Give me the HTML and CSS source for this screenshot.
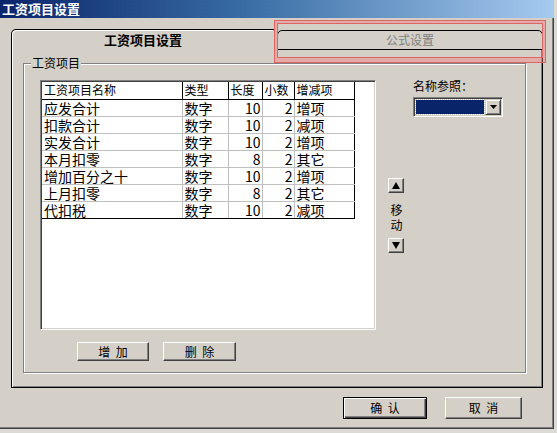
FILE: index.html
```html
<!DOCTYPE html>
<html lang="zh-CN">
<head>
<meta charset="utf-8">
<title>工资项目设置</title>
<link rel="stylesheet" href="styles.css">
</head>
<body>
<div class="window">
  <div class="titlebar">工资项目设置</div>
  <div class="client">
    <div class="tabctl">
      <div class="tabstrip">
        <div class="tab active">工资项目设置</div>
        <div class="tab inactive">公式设置</div>
      </div>
      <div class="panel">
        <div class="group">
          <span class="group-label">工资项目</span>
          <div class="group-inner">
            <div class="leftcol">
              <div class="grid">
                <table class="items">
                  <colgroup>
                    <col class="c-name"><col class="c-type"><col class="c-len"><col class="c-dec"><col class="c-sign">
                  </colgroup>
                  <thead>
                    <tr><th>工资项目名称</th><th>类型</th><th>长度</th><th>小数</th><th>增减项</th></tr>
                  </thead>
                  <tbody>
                    <tr><td>应发合计</td><td>数字</td><td class="num">10</td><td class="num">2</td><td>增项</td></tr>
                    <tr><td>扣款合计</td><td>数字</td><td class="num">10</td><td class="num">2</td><td>减项</td></tr>
                    <tr><td>实发合计</td><td>数字</td><td class="num">10</td><td class="num">2</td><td>增项</td></tr>
                    <tr><td>本月扣零</td><td>数字</td><td class="num">8</td><td class="num">2</td><td>其它</td></tr>
                    <tr><td>增加百分之十</td><td>数字</td><td class="num">10</td><td class="num">2</td><td>增项</td></tr>
                    <tr><td>上月扣零</td><td>数字</td><td class="num">8</td><td class="num">2</td><td>其它</td></tr>
                    <tr><td>代扣税</td><td>数字</td><td class="num">10</td><td class="num">2</td><td>减项</td></tr>
                  </tbody>
                </table>
              </div>
              <div class="btnrow">
                <button class="btn btn-add">增 加</button>
                <button class="btn btn-del">删 除</button>
              </div>
            </div>
            <div class="mover">
              <button class="arrow"><svg width="8" height="7" viewBox="0 0 8 7"><polygon points="4,0 8,7 0,7" fill="#000"/></svg></button>
              <div class="move-label">移动</div>
              <button class="arrow"><svg width="8" height="7" viewBox="0 0 8 7"><polygon points="0,0 8,0 4,7" fill="#000"/></svg></button>
            </div>
            <div class="refcol">
              <div class="ref-label">名称参照：</div>
              <div class="combo">
                <div class="combo-value"></div>
                <div class="combo-btn"><svg width="7" height="4" viewBox="0 0 7 4"><polygon points="0,0 7,0 3.5,4" fill="#000"/></svg></div>
              </div>
            </div>
          </div>
        </div>
      </div>
    </div>
    <div class="footer">
      <button class="btn btn-default btn-ok">确 认</button>
      <button class="btn btn-cancel">取 消</button>
    </div>
  </div>
  <div class="highlight"><div class="highlight-inner"></div></div>
</div>
</body>
</html>
```

FILE: styles.css
```css
html, body {
  margin: 0;
  padding: 0;
}
body {
  width: 557px;
  height: 433px;
  overflow: hidden;
  background: #dcdad5;
  font-family: "Noto Sans CJK SC", "Noto Sans", "Liberation Sans", sans-serif;
  font-size: 12px;
  color: #000;
}
.window {
  position: relative;
  width: 554px;
  height: 429px;
  box-sizing: border-box;
  background: #d4d0c8;
  border-right: 1px solid #404040;
  border-bottom: 1px solid #404040;
  box-shadow: inset -1px -1px #808080;
  display: flex;
  flex-direction: column;
}
.titlebar {
  flex: none;
  height: 18px;
  margin-right: -1px;
  background: linear-gradient(90deg, #0a246a 0%, #3a6ea5 45%, #a6caf0 100%);
  color: #fff;
  font-weight: bold;
  font-size: 13px;
  line-height: 18px;
  padding-left: 2px;
}
.client {
  flex: 1;
  padding: 11px 0 0 11px;
}
.tabctl {
  width: 532px;
}
.tabstrip {
  display: flex;
  align-items: flex-end;
  gap: 2px;
  height: 21px;
}
.tab {
  box-sizing: border-box;
  text-align: center;
}
.tab.active {
  width: 264px;
  height: 21px;
  border: 1px solid #000;
  border-bottom: none;
  border-top-left-radius: 5px;
  border-top-right-radius: 2px;
  box-shadow: inset 1px 1px #fff;
  font-weight: bold;
  font-size: 13px;
  line-height: 20px;
}
.tab.inactive {
  width: 266px;
  height: 20px;
  border: 1px solid #000;
  border-radius: 5px 5px 0 0;
  color: #808080;
  font-size: 12px;
  line-height: 18px;
}
.panel {
  box-sizing: border-box;
  height: 338px;
  border: 1px solid #000;
  border-top: none;
  box-shadow: inset 1px 0 #fff, inset -1px -1px #808080;
  padding: 13px 0 0 11px;
}
.group {
  position: relative;
  box-sizing: border-box;
  width: 503px;
  height: 310px;
  border: 1px solid #808080;
  box-shadow: inset 1px 1px #fff, 1px 1px #fff;
  padding: 16px 0 0 16px;
}
.group-label {
  position: absolute;
  left: 7px;
  top: -9px;
  padding: 0 1px;
  background: #d4d0c8;
  font-size: 12px;
  line-height: 16px;
}
.group-inner {
  display: flex;
  align-items: flex-start;
}
.leftcol {
  width: 336px;
}
.grid {
  box-sizing: border-box;
  height: 250px;
  background: #fff;
  border: 1px solid;
  border-color: #808080 #fff #fff #808080;
  box-shadow: inset 1px 1px #404040, inset -1px -1px #d4d0c8;
  padding: 1px 0 0 1px;
}
.items {
  border-collapse: collapse;
  table-layout: fixed;
  width: 312px;
}
.c-name { width: 140px; }
.c-type { width: 46px; }
.c-len { width: 34px; }
.c-dec { width: 32px; }
.c-sign { width: 60px; }
.items tr {
  height: 17px;
}
.items th,
.items td {
  padding: 0 2px;
  line-height: 16px;
  white-space: nowrap;
  overflow: hidden;
  text-align: left;
}
.items th {
  font-weight: normal;
  font-size: 12px;
  border-right: 1px solid #000;
  border-bottom: 1px solid #000;
}
.items td {
  font-size: 14px;
  border: 1px solid #c0c0c0;
}
.items td:first-child {
  border-left: none;
}
.items td:last-child {
  border-right-color: #000;
}
.items tbody tr:last-child td {
  border-bottom-color: #000;
}
.items td.num {
  text-align: right;
  padding-right: 1px;
}
.btnrow {
  display: flex;
  gap: 14px;
  margin-top: 12px;
  padding-left: 37px;
}
.btn {
  box-sizing: border-box;
  font-family: inherit;
  font-size: 12px;
  line-height: 14px;
  word-spacing: 3px;
  color: #000;
  background: #d4d0c8;
  border: 1px solid;
  border-color: #fff #404040 #404040 #fff;
  box-shadow: inset -1px -1px #808080;
  padding: 0;
  margin: 0;
}
.btn-add {
  width: 72px;
  height: 19px;
}
.btn-del {
  width: 73px;
  height: 19px;
}
.mover {
  width: 16px;
  margin-left: 12px;
  margin-top: 98px;
  display: flex;
  flex-direction: column;
  align-items: center;
}
.arrow {
  box-sizing: border-box;
  width: 16px;
  height: 15px;
  padding: 0;
  margin: 0;
  background: #d4d0c8;
  border: 1px solid;
  border-color: #fff #404040 #404040 #fff;
  box-shadow: inset -1px -1px #808080;
  display: flex;
  align-items: center;
  justify-content: center;
}
.arrow svg {
  display: block;
}
.move-label {
  width: 12px;
  margin: 9px 0 6px 1px;
  font-size: 12px;
  line-height: 15px;
}
.refcol {
  margin-left: 9px;
}
.ref-label {
  font-size: 12px;
  line-height: 14px;
  margin-top: -1px;
}
.combo {
  box-sizing: border-box;
  width: 90px;
  height: 20px;
  margin-top: 4px;
  background: #fff;
  border: 1px solid;
  border-color: #808080 #fff #fff #808080;
  box-shadow: inset 1px 1px #404040, inset -1px -1px #d4d0c8;
  padding: 1px 1px 1px 1px;
  display: flex;
}
.combo-value {
  flex: 1;
  margin: 1px 1px 1px 1px;
  background: #0a246a;
  outline: 1px dotted #c8c8c8;
}
.combo-btn {
  box-sizing: border-box;
  width: 16px;
  height: 16px;
  background: #d4d0c8;
  border: 1px solid;
  border-color: #d4d0c8 #404040 #404040 #d4d0c8;
  box-shadow: inset 1px 1px #fff, inset -1px -1px #808080;
  display: flex;
  align-items: center;
  justify-content: center;
}
.combo-btn svg {
  display: block;
}
.footer {
  display: flex;
  justify-content: flex-end;
  gap: 18px;
  margin-top: 9px;
  padding-right: 31px;
}
.btn-ok {
  width: 84px;
  height: 22px;
}
.btn-default {
  border: 1px solid #000;
  box-shadow: inset 1px 1px #fff, inset -1px -1px #404040, inset -2px -2px #808080;
}
.btn-cancel {
  width: 77px;
  height: 22px;
}
.highlight {
  position: absolute;
  left: 274px;
  top: 20px;
  width: 272px;
  height: 43px;
  box-sizing: border-box;
  border: 1px solid #e06464;
}
.highlight-inner {
  box-sizing: border-box;
  height: 100%;
  border: 2px solid rgba(245, 130, 130, 0.45);
  border-bottom-width: 4px;
  box-shadow: inset 0 0 0 1px #e06464;
}
```
